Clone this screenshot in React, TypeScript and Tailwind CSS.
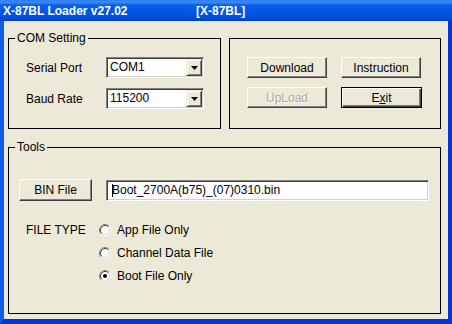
import React from 'react';

const raised =
    'bg-[#ECE9D8] border border-t-white border-l-white border-r-[#404040] border-b-[#404040] shadow-[inset_-1px_-1px_0_#808080]';
const sunken =
    'bg-white border border-t-[#808080] border-l-[#808080] border-r-white border-b-white shadow-[inset_1px_1px_0_#404040,inset_-1px_-1px_0_#d4d0c8]';

const ComboBox: React.FC<{ value: string }> = ({ value }) => (
    <div className={`${sunken} flex items-center w-[98px] h-[21px]`}>
        <span className="flex-1 pl-[3px] leading-[17px]">{value}</span>
        <div
            className="mr-[1px] w-[16px] h-[17px] flex items-center justify-center bg-[#ECE9D8] border border-t-[#ECE9D8] border-l-[#ECE9D8] border-r-[#404040] border-b-[#404040] shadow-[inset_1px_1px_0_#fff,inset_-1px_-1px_0_#808080]"
        >
            <svg width="7" height="4" viewBox="0 0 7 4">
                <path d="M0 0h7L3.5 4z" fill="#000" />
            </svg>
        </div>
    </div>
);

const Radio: React.FC<{ label: string; checked?: boolean }> = ({ label, checked }) => (
    <div className="flex items-center gap-[6px] h-[16px]">
        <svg width="12" height="12" viewBox="0 0 12 12">
            <circle cx="6" cy="6" r="5" fill="#fff" />
            <path d="M2.11 9.89A5.5 5.5 0 0 1 9.89 2.11" stroke="#808080" fill="none" />
            <path d="M9.89 2.11A5.5 5.5 0 0 1 2.11 9.89" stroke="#fff" fill="none" />
            <path d="M2.82 9.18A4.5 4.5 0 0 1 9.18 2.82" stroke="#404040" fill="none" />
            <path d="M9.18 2.82A4.5 4.5 0 0 1 2.82 9.18" stroke="#d4d0c8" fill="none" />
            {checked && <circle cx="6" cy="6" r="2" fill="#000" />}
        </svg>
        <span className="leading-[16px]">{label}</span>
    </div>
);

const App: React.FC = () => {
    return (
        <div className="w-[452px] h-[324px] flex flex-col overflow-hidden font-['Liberation_Sans',Arial,sans-serif] text-[12px] text-black">
            {/* title bar */}
            <div className="h-[21px] flex items-center pl-[3px] text-white font-bold text-[12px] bg-[linear-gradient(180deg,#2C7BF2_0%,#3D8EF8_10%,#0A5DEB_25%,#0055E6_60%,#0050DF_82%,#0040C4_100%)]">
                <span className="w-[193px]">X-87BL Loader v27.02</span>
                <span>[X-87BL]</span>
            </div>

            {/* client area */}
            <div className="flex-1 flex flex-col bg-[#ECE9D8] border-l-[4px] border-l-[#0B5CE8] border-r-[4px] border-r-[#0831D9] border-b-[5px] border-b-[#0831D9] pt-[10px] pl-[4px]">
                <div className="flex items-start gap-[8px]">
                    <fieldset className="w-[213px] h-[98px] border border-black">
                        <legend className="ml-[6px] px-[2px] leading-[14px]">COM Setting</legend>
                        <div className="flex flex-col gap-[10px] pt-[12px] pl-[17px]">
                            <div className="flex items-center">
                                <span className="w-[80px]">Serial Port</span>
                                <ComboBox value="COM1" />
                            </div>
                            <div className="flex items-center">
                                <span className="w-[80px]">Baud Rate</span>
                                <ComboBox value="115200" />
                            </div>
                        </div>
                    </fieldset>

                    <fieldset className="mt-[7px] w-[212px] h-[91px] border border-black">
                        <div className="grid grid-cols-[80px_80px] gap-x-[14px] gap-y-[9px] pt-[18px] pl-[17px]">
                            <button className={`${raised} h-[21px]`}>Download</button>
                            <button className={`${raised} h-[21px]`}>Instruction</button>
                            <button className={`${raised} h-[21px] text-[#ACA899] [text-shadow:1px_1px_0_#fff]`} disabled>
                                UpLoad
                            </button>
                            <button className="h-[21px] w-[81px] bg-[#ECE9D8] border border-black shadow-[inset_1px_1px_0_#fff,inset_-1px_-1px_0_#404040,inset_-2px_-2px_0_#808080]">
                                E<span className="underline">x</span>it
                            </button>
                        </div>
                    </fieldset>
                </div>

                <fieldset className="mt-[11px] w-[433px] h-[174px] border border-black">
                    <legend className="ml-[6px] px-[2px] leading-[14px]">Tools</legend>
                    <div className="pt-[25px] pl-[10px]">
                        <div className="flex items-center gap-[14px] h-[22px]">
                            <button className={`${raised} w-[73px] h-[22px]`}>BIN File</button>
                            <div className={`${sunken} w-[323px] h-[21px] flex items-center pl-[5px]`}>
                                <span className="w-px h-[13px] bg-black" />
                                <span className="-ml-px">Boot_2700A(b75)_(07)0310.bin</span>
                            </div>
                        </div>

                        <div className="flex mt-[21px] ml-[7px]">
                            <span className="w-[73px] leading-[16px]">FILE TYPE</span>
                            <div className="flex flex-col gap-[7px]">
                                <Radio label="App File Only" />
                                <Radio label="Channel Data File" />
                                <Radio label="Boot File Only" checked />
                            </div>
                        </div>
                    </div>
                </fieldset>
            </div>
        </div>
    );
};

export default App;
